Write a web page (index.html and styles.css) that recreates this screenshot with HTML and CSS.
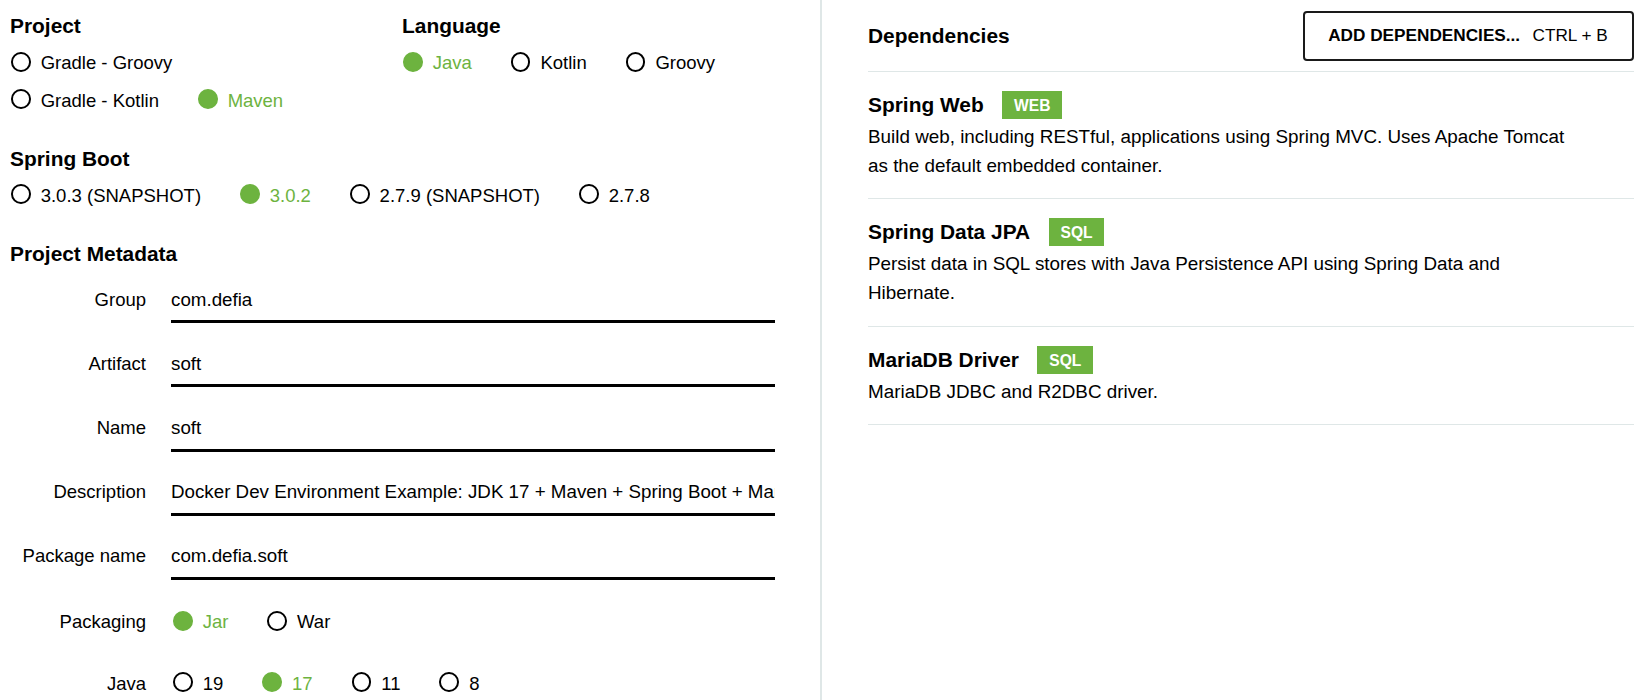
FILE: index.html
```html
<!DOCTYPE html>
<html lang="en">
<head>
<meta charset="utf-8">
<title>Spring Initializr</title>
<link rel="stylesheet" href="styles.css">
</head>
<body>
<div class="app">
  <main class="left">
    <div class="cols">
      <section class="section col-project">
        <h2 class="heading">Project</h2>
        <div class="radios radios-project">
          <label class="radio"><span class="dot"></span><span class="radio-text">Gradle - Groovy</span></label>
          <label class="radio"><span class="dot"></span><span class="radio-text">Gradle - Kotlin</span></label>
          <label class="radio is-checked"><span class="dot"></span><span class="radio-text">Maven</span></label>
        </div>
      </section>
      <section class="section col-language">
        <h2 class="heading">Language</h2>
        <div class="radios">
          <label class="radio is-checked"><span class="dot"></span><span class="radio-text">Java</span></label>
          <label class="radio"><span class="dot"></span><span class="radio-text">Kotlin</span></label>
          <label class="radio"><span class="dot"></span><span class="radio-text">Groovy</span></label>
        </div>
      </section>
    </div>

    <section class="section">
      <h2 class="heading">Spring Boot</h2>
      <div class="radios">
        <label class="radio"><span class="dot"></span><span class="radio-text">3.0.3 (SNAPSHOT)</span></label>
        <label class="radio is-checked"><span class="dot"></span><span class="radio-text">3.0.2</span></label>
        <label class="radio"><span class="dot"></span><span class="radio-text">2.7.9 (SNAPSHOT)</span></label>
        <label class="radio"><span class="dot"></span><span class="radio-text">2.7.8</span></label>
      </div>
    </section>

    <section class="section meta">
      <h2 class="heading">Project Metadata</h2>
      <div class="meta-rows">
        <div class="field">
          <label class="field-label" for="f-group">Group</label>
          <input class="field-input" id="f-group" type="text" value="com.defia" readonly>
        </div>
        <div class="field">
          <label class="field-label" for="f-artifact">Artifact</label>
          <input class="field-input" id="f-artifact" type="text" value="soft" readonly>
        </div>
        <div class="field">
          <label class="field-label" for="f-name">Name</label>
          <input class="field-input" id="f-name" type="text" value="soft" readonly>
        </div>
        <div class="field">
          <label class="field-label" for="f-desc">Description</label>
          <input class="field-input" id="f-desc" type="text" value="Docker Dev Environment Example: JDK 17 + Maven + Spring Boot + MariaDB" readonly>
        </div>
        <div class="field">
          <label class="field-label" for="f-pkg">Package name</label>
          <input class="field-input" id="f-pkg" type="text" value="com.defia.soft" readonly>
        </div>
        <div class="field field-radio">
          <span class="field-label">Packaging</span>
          <div class="radios">
            <label class="radio is-checked"><span class="dot"></span><span class="radio-text">Jar</span></label>
            <label class="radio"><span class="dot"></span><span class="radio-text">War</span></label>
          </div>
        </div>
        <div class="field field-radio">
          <span class="field-label">Java</span>
          <div class="radios">
            <label class="radio"><span class="dot"></span><span class="radio-text">19</span></label>
            <label class="radio is-checked"><span class="dot"></span><span class="radio-text">17</span></label>
            <label class="radio"><span class="dot"></span><span class="radio-text">11</span></label>
            <label class="radio"><span class="dot"></span><span class="radio-text">8</span></label>
          </div>
        </div>
      </div>
    </section>
  </main>

  <aside class="right">
    <div class="deps-header">
      <h2 class="heading heading-deps">Dependencies</h2>
      <button class="add-btn" type="button"><span class="add-btn-main">ADD DEPENDENCIES...</span><span class="add-btn-key">CTRL + B</span></button>
    </div>

    <div class="dep">
      <div class="dep-title-row">
        <span class="dep-title">Spring Web</span>
        <span class="badge">WEB</span>
      </div>
      <p class="dep-desc">Build web, including RESTful, applications using Spring MVC. Uses Apache Tomcat as the default embedded container.</p>
    </div>

    <div class="dep">
      <div class="dep-title-row">
        <span class="dep-title">Spring Data JPA</span>
        <span class="badge">SQL</span>
      </div>
      <p class="dep-desc">Persist data in SQL stores with Java Persistence API using Spring Data and Hibernate.</p>
    </div>

    <div class="dep">
      <div class="dep-title-row">
        <span class="dep-title">MariaDB Driver</span>
        <span class="badge">SQL</span>
      </div>
      <p class="dep-desc">MariaDB JDBC and R2DBC driver.</p>
    </div>
  </aside>
</div>
</body>
</html>
```

FILE: styles.css
```css
html, body {
  margin: 0;
  padding: 0;
  height: 100%;
  overflow: hidden;
  background: #fff;
}

body {
  font-family: "Liberation Sans", Arial, Helvetica, sans-serif;
  font-size: 18.5px;
  color: #000;
}

.app {
  display: flex;
  height: 700px;
}

/* ---------- left panel ---------- */
.left {
  width: 822px;
  flex: 0 0 822px;
  box-sizing: border-box;
  border-right: 2px solid #dfe7e7;
  padding: 13px 45px 0 10px;
}

.heading {
  margin: 0 0 5px;
  font-size: 20.9px;
  font-weight: 700;
  line-height: 26px;
}

.section {
  margin-bottom: 26.5px;
}

.cols {
  display: flex;
}

.col-project {
  width: 392px;
  flex: 0 0 392px;
}

.radios {
  display: flex;
  flex-wrap: wrap;
}

.radios-project {
  width: 340px;
}

.radio {
  display: flex;
  align-items: center;
  height: 37.5px;
  line-height: 37.5px;
  margin-right: 38px;
  cursor: pointer;
}

.dot {
  box-sizing: border-box;
  width: 19.7px;
  height: 19.7px;
  border: 2.2px solid #000;
  border-radius: 50%;
  margin: 0 10px 2px 1px;
  flex: 0 0 auto;
}

.radio.is-checked .dot {
  border-color: #6db33f;
  background: #6db33f;
}

.radio.is-checked .radio-text {
  color: #6db33f;
}

/* ---------- metadata ---------- */
.meta .heading {
  margin-bottom: 16.5px;
}

.meta-rows {
  display: flex;
  flex-direction: column;
  gap: 23.7px;
}

.field {
  display: flex;
  align-items: baseline;
}

.field-label {
  width: 136px;
  flex: 0 0 136px;
  margin-right: 25px;
  text-align: right;
  line-height: 24px;
}

.field-input {
  flex: 1 1 0;
  min-width: 0;
  width: 100%;
  height: 24px;
  margin: 0;
  padding: 5px 0 8.4px;
  border: 0;
  border-bottom: 3px solid #000;
  border-radius: 0;
  background: transparent;
  color: #000;
  font-family: inherit;
  font-size: 18.75px;
  line-height: 24px;
  outline: none;
}

.field-radio {
  align-items: center;
}

.field-radio .field-label {
  line-height: 37.5px;
}

.field-radio .radios {
  margin-left: 1px;
}

/* ---------- right panel ---------- */
.right {
  flex: 1 1 auto;
  padding: 0 10.5px 0 46px;
}

.deps-header {
  display: flex;
  align-items: center;
  justify-content: space-between;
  padding: 10.7px 0 10px;
  border-bottom: 1px solid #dfe7e7;
}

.heading-deps {
  margin: 0;
}

.add-btn {
  box-sizing: border-box;
  width: 331px;
  height: 50px;
  display: flex;
  align-items: center;
  justify-content: center;
  gap: 12.4px;
  border: 2px solid #1a1a1a;
  border-radius: 4px;
  background: #fff;
  color: #000;
  font-family: inherit;
  font-size: 17.2px;
  padding: 0;
  cursor: pointer;
}

.add-btn-main {
  font-weight: 700;
}

.dep {
  padding: 19px 0 18.5px;
  border-bottom: 1px solid #dfe7e7;
}

.dep-title-row {
  display: flex;
  align-items: center;
  gap: 18.5px;
  height: 28px;
  margin-bottom: 3px;
}

.dep-title {
  font-size: 20.9px;
  font-weight: 700;
  line-height: 28px;
}

.badge {
  display: inline-block;
  height: 28px;
  line-height: 29px;
  padding: 0 11.9px;
  background: #6db33f;
  color: #fff;
  font-size: 15.6px;
  font-weight: 700;
}

.dep-desc {
  margin: 0;
  padding-right: 58px;
  font-size: 18.85px;
  line-height: 29px;
}
```
